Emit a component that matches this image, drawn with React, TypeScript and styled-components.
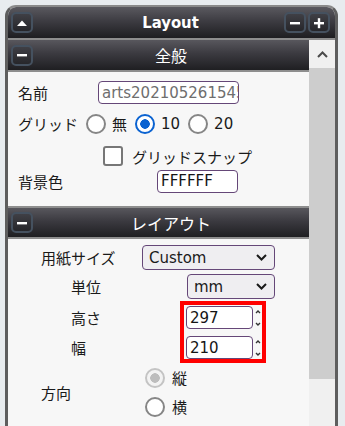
import React from "react";
import styled, { createGlobalStyle } from "styled-components";

const GlobalStyle = createGlobalStyle`
  html, body { margin: 0; padding: 0; }
  body {
    width: 345px;
    height: 426px;
    overflow: hidden;
    background: #e8ecef;
    font-family: "DejaVu Sans", "Noto Sans CJK JP", sans-serif;
    color: #1a1a1a;
  }
`;

const Panel = styled.div`
  margin: 5px 0 0 5px;
  width: 333px;
  height: 421px;
  box-sizing: border-box;
  border: 3px solid #5e5e5e;
  border-top: 2px solid #8a8a8a;
  border-bottom: none;
  border-radius: 11px 11px 0 0;
  overflow: hidden;
  display: flex;
  flex-direction: column;
  background: #f7f7f7;
`;

const Header = styled.div`
  flex: none;
  height: 31px;
  display: grid;
  grid-template-columns: 1fr auto 1fr;
  align-items: center;
  padding: 0 5px 0 3px;
  background: linear-gradient(#5a595f, #3d3c42 45%, #1e1e21);
  border-bottom: 2px solid #8e8e8e;
`;

const Title = styled.div`
  color: #fff;
  font-family: "DejaVu Sans Condensed", "DejaVu Sans", sans-serif;
  font-weight: bold;
  font-size: 16.5px;
`;

const RightTools = styled.div`
  justify-self: end;
  display: flex;
  gap: 2px;
`;

const IconButton = styled.span`
  width: 22px;
  height: 21px;
  box-sizing: border-box;
  border: 2px solid #45515f;
  border-radius: 5px;
  background: linear-gradient(#3f3f45, #26262a);
  display: flex;
  align-items: center;
  justify-content: center;
  justify-self: start;
`;

const BodyRow = styled.div`
  flex: 1;
  display: flex;
  min-height: 0;
`;

const Main = styled.div`
  width: 301px;
  flex: none;
  display: flex;
  flex-direction: column;
`;

const Scrollbar = styled.div`
  width: 26px;
  flex: none;
  display: flex;
  flex-direction: column;
  background: #f0f0f0;
`;

const ScrollUp = styled.div`
  height: 28px;
  display: flex;
  align-items: center;
  justify-content: center;
`;

const Thumb = styled.div`
  height: 311px;
  background: #cdcdcd;
`;

const SectionHeader = styled.div<{ $first?: boolean }>`
  height: ${(p) => (p.$first ? 30 : 29)}px;
  display: flex;
  align-items: center;
  padding-left: 3px;
  background: linear-gradient(#58575d, #3b3a40 45%, #1f1f22);
  border-top: ${(p) => (p.$first ? "none" : "2px solid #8e8e8e")};
  border-bottom: 2px solid #8e8e8e;
`;

const SectionTitle = styled.div`
  flex: 1;
  text-align: center;
  color: #fff;
  font-family: "Noto Sans CJK JP", sans-serif;
  font-size: 16px;
`;

const SectionBody = styled.div<{ $pad: string }>`
  padding: ${(p) => p.$pad};
  display: flex;
  flex-direction: column;
`;

const Row = styled.div<{ $h: number; $indent?: number; $right?: number; $mt?: number }>`
  height: ${(p) => p.$h}px;
  display: flex;
  align-items: center;
  padding-left: ${(p) => p.$indent ?? 0}px;
  padding-right: ${(p) => p.$right ?? 0}px;
  margin-top: ${(p) => p.$mt ?? 0}px;
`;

const Label = styled.span<{ $w?: number }>`
  font-size: 15px;
  white-space: nowrap;
  width: ${(p) => (p.$w ? `${p.$w}px` : "auto")};
  flex: none;
`;

const TextField = styled.input<{ $w: number; $muted?: boolean }>`
  width: ${(p) => p.$w}px;
  height: 23px;
  box-sizing: border-box;
  border: 1px solid #654778;
  border-radius: 4px;
  background: #fff;
  padding: 0 0 0 3px;
  font-family: "DejaVu Sans", sans-serif;
  font-size: 15px;
  color: ${(p) => (p.$muted ? "#6e6e6e" : "#151515")};
  outline: none;
`;

const Option = styled.span`
  display: flex;
  align-items: center;
  gap: 6px;
  font-size: 15px;
`;

const Options = styled.div<{ $column?: boolean }>`
  display: flex;
  flex-direction: ${(p) => (p.$column ? "column" : "row")};
  gap: ${(p) => (p.$column ? 0 : 8)}px;
`;

const RadioMark = styled.span<{ $state: "off" | "on" | "dis" }>`
  width: 20px;
  height: 20px;
  box-sizing: border-box;
  border-radius: 50%;
  flex: none;
  border: ${(p) =>
    p.$state === "on" ? "2.5px solid #0b63d1" : p.$state === "dis" ? "2px solid #c4c4c4" : "2px solid #868686"};
  background: ${(p) =>
    p.$state === "on"
      ? "radial-gradient(circle, #0b63d1 0 4.5px, #fff 5px)"
      : p.$state === "dis"
      ? "radial-gradient(circle, #bdbdbd 0 4.5px, #f3f3f3 5px)"
      : "#fff"};
`;

const RadioRow = styled.div`
  height: 29px;
  display: flex;
  align-items: center;
  gap: 7px;
  font-size: 15px;
`;

const CheckBox = styled.span`
  width: 20px;
  height: 20px;
  box-sizing: border-box;
  border: 2px solid #777;
  border-radius: 3px;
  background: #fff;
  flex: none;
  margin-right: 9px;
`;

const SelectBox = styled.div<{ $w: number }>`
  margin-left: auto;
  width: ${(p) => p.$w}px;
  height: 25px;
  box-sizing: border-box;
  border: 1px solid #654778;
  border-radius: 4px;
  background: #efeef1;
  display: flex;
  align-items: center;
  justify-content: space-between;
  padding: 0 7px 0 6px;
  font-family: "DejaVu Sans", sans-serif;
  font-size: 15px;
  color: #1a1a1a;
`;

const SizeRow = styled.div`
  display: flex;
  align-items: flex-start;
  margin-top: 2px;
  padding-right: 43px;
`;

const SizeLabels = styled.div`
  flex: 1;
  padding: 5px 0 0 63px;
  display: flex;
  flex-direction: column;
  gap: 7px;
`;

const SizeLabel = styled.span`
  height: 23px;
  display: flex;
  align-items: center;
  font-size: 15px;
`;

const RedBox = styled.div`
  width: 86px;
  box-sizing: border-box;
  border: 4px solid #ff0000;
  padding: 1px 0 0 2px;
  display: flex;
  flex-direction: column;
  gap: 7px;
`;

const NumberRow = styled.div`
  display: flex;
  align-items: center;
  gap: 2px;
  height: 23px;
`;

const DirectionRow = styled.div`
  display: flex;
  align-items: center;
  padding-left: 33px;
`;

const Chevron = ({ up }: { up?: boolean }) => (
  <svg width="11" height="7" viewBox="0 0 11 7">
    <polyline
      points={up ? "1,6 5.5,1.5 10,6" : "1,1 5.5,5.5 10,1"}
      fill="none"
      stroke={up ? "#4a4a4a" : "#1a1a1a"}
      strokeWidth="2"
    />
  </svg>
);

const Spinner = () => (
  <svg width="6" height="20" viewBox="0 0 6 20">
    <polyline points="1,5 3,3 5,5" fill="none" stroke="#333" strokeWidth="1.4" />
    <polyline points="1,15 3,17 5,15" fill="none" stroke="#333" strokeWidth="1.4" />
  </svg>
);

const TriUp = () => (
  <svg width="12" height="8" viewBox="0 0 12 8">
    <path d="M1 7 L6 1.5 L11 7 Z" fill="#fff" />
  </svg>
);

const Minus = () => (
  <svg width="12" height="12" viewBox="0 0 12 12">
    <rect x="1" y="5" width="10" height="2.4" fill="#fff" />
  </svg>
);

const Plus = () => (
  <svg width="12" height="12" viewBox="0 0 12 12">
    <rect x="1" y="5" width="10" height="2.4" fill="#fff" />
    <rect x="4.8" y="1.2" width="2.4" height="10" fill="#fff" />
  </svg>
);

export default function App() {
  return (
    <>
      <GlobalStyle />
      <Panel>
        <Header>
          <IconButton>
            <TriUp />
          </IconButton>
          <Title>Layout</Title>
          <RightTools>
            <IconButton>
              <Minus />
            </IconButton>
            <IconButton>
              <Plus />
            </IconButton>
          </RightTools>
        </Header>
        <BodyRow>
          <Main>
            <SectionHeader $first>
              <IconButton>
                <Minus />
              </IconButton>
              <SectionTitle>全般</SectionTitle>
            </SectionHeader>
            <SectionBody $pad="9px 0 13px 10px">
              <Row $h={23}>
                <Label $w={80}>名前</Label>
                <TextField $w={141} $muted readOnly value="arts20210526154512" />
              </Row>
              <Row $h={39}>
                <Label $w={68}>グリッド</Label>
                <Options>
                  <Option>
                    <RadioMark $state="off" />無
                  </Option>
                  <Option>
                    <RadioMark $state="on" />10
                  </Option>
                  <Option>
                    <RadioMark $state="off" />20
                  </Option>
                </Options>
              </Row>
              <Row $h={26} $indent={85}>
                <CheckBox />
                <Label>グリッドスナップ</Label>
              </Row>
              <Row $h={24}>
                <Label $w={139}>背景色</Label>
                <TextField $w={81} readOnly value="FFFFFF" />
              </Row>
            </SectionBody>
            <SectionHeader>
              <IconButton>
                <Minus />
              </IconButton>
              <SectionTitle>レイアウト</SectionTitle>
            </SectionHeader>
            <SectionBody $pad="6px 0 0 0">
              <Row $h={25} $indent={33} $right={34}>
                <Label>用紙サイズ</Label>
                <SelectBox $w={133}>
                  Custom
                  <Chevron />
                </SelectBox>
              </Row>
              <Row $h={25} $indent={63} $right={34} $mt={4}>
                <Label>単位</Label>
                <SelectBox $w={88}>
                  mm
                  <Chevron />
                </SelectBox>
              </Row>
              <SizeRow>
                <SizeLabels>
                  <SizeLabel>高さ</SizeLabel>
                  <SizeLabel>幅</SizeLabel>
                </SizeLabels>
                <RedBox>
                  <NumberRow>
                    <TextField $w={67} readOnly value="297" />
                    <Spinner />
                  </NumberRow>
                  <NumberRow>
                    <TextField $w={67} readOnly value="210" />
                    <Spinner />
                  </NumberRow>
                </RedBox>
              </SizeRow>
              <DirectionRow>
                <Label $w={104}>方向</Label>
                <Options $column>
                  <RadioRow>
                    <RadioMark $state="dis" />縦
                  </RadioRow>
                  <RadioRow>
                    <RadioMark $state="off" />横
                  </RadioRow>
                </Options>
              </DirectionRow>
            </SectionBody>
          </Main>
          <Scrollbar>
            <ScrollUp>
              <Chevron up />
            </ScrollUp>
            <Thumb />
          </Scrollbar>
        </BodyRow>
      </Panel>
    </>
  );
}
